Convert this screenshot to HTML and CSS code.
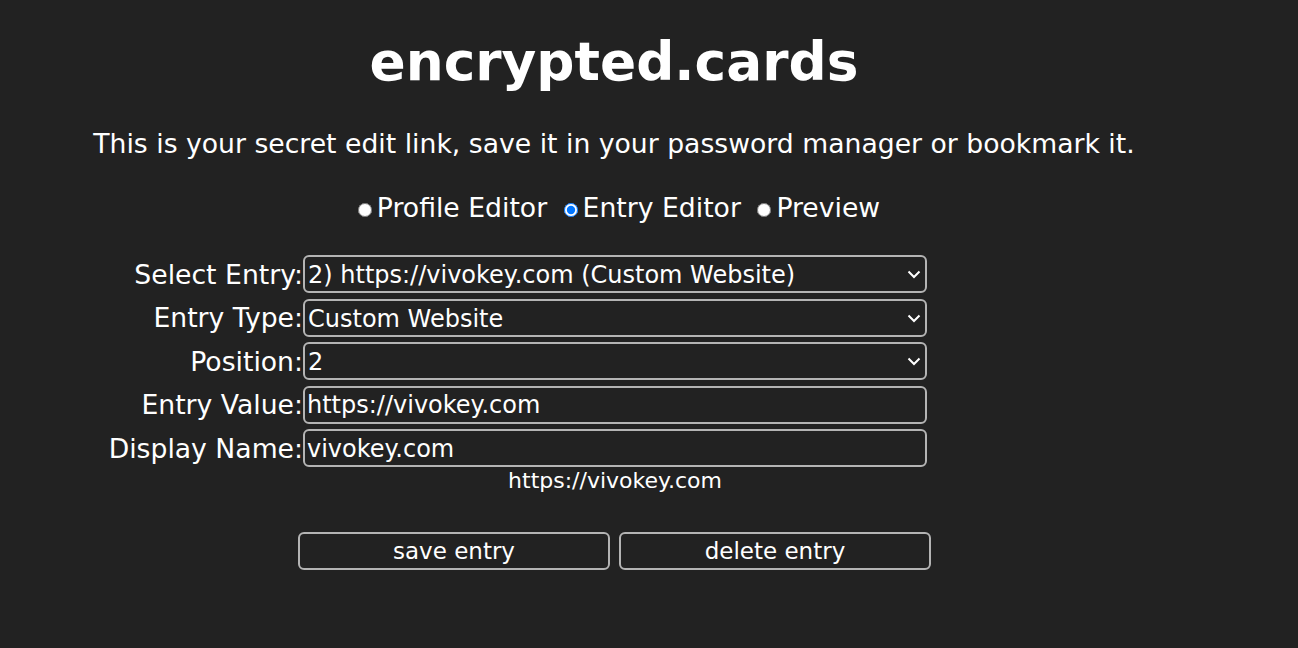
FILE: index.html
```html
<!DOCTYPE html>
<html lang="en">
<head>
    <meta charset="UTF-8">
    <meta name="viewport" content="width=device-width, initial-scale=1.0">
    <title>encrypted.cards</title>
    <link rel="stylesheet" href="styles.css">
</head>
<body>
    <div class="page">
        <h1>encrypted.cards</h1>

        <p class="notice">This is your secret edit link, save it in your password manager or bookmark it.</p>

        <div class="modes">
            <label class="mode"><input type="radio" name="mode" value="profile">Profile Editor</label>
            <label class="mode"><input type="radio" name="mode" value="entry" checked>Entry Editor</label>
            <label class="mode"><input type="radio" name="mode" value="preview">Preview</label>
        </div>

        <form id="entry-form" class="entry-form">
            <label for="select-entry">Select Entry:</label>
            <div class="select-wrap">
                <select id="select-entry">
                    <option>1) vivokey.com</option>
                    <option selected>2) https://vivokey.com (Custom Website)</option>
                </select>
                <svg class="chevron" width="14" height="9" viewBox="0 0 14 9"><path d="M1.5 1.5 L7 7 L12.5 1.5" fill="none" stroke="#ffffff" stroke-width="2"/></svg>
            </div>

            <label for="entry-type">Entry Type:</label>
            <div class="select-wrap">
                <select id="entry-type">
                    <option selected>Custom Website</option>
                    <option>Email</option>
                    <option>Phone</option>
                </select>
                <svg class="chevron" width="14" height="9" viewBox="0 0 14 9"><path d="M1.5 1.5 L7 7 L12.5 1.5" fill="none" stroke="#ffffff" stroke-width="2"/></svg>
            </div>

            <label for="position">Position:</label>
            <div class="select-wrap">
                <select id="position">
                    <option>1</option>
                    <option selected>2</option>
                </select>
                <svg class="chevron" width="14" height="9" viewBox="0 0 14 9"><path d="M1.5 1.5 L7 7 L12.5 1.5" fill="none" stroke="#ffffff" stroke-width="2"/></svg>
            </div>

            <label for="entry-value">Entry Value:</label>
            <input id="entry-value" type="text" value="https://vivokey.com">

            <label for="display-name">Display Name:</label>
            <input id="display-name" type="text" value="vivokey.com">

            <div class="entry-preview">https://vivokey.com</div>
        </form>

        <div class="actions">
            <button type="button">save entry</button>
            <button type="button">delete entry</button>
        </div>
    </div>
</body>
</html>
```

FILE: styles.css
```css
* {
    box-sizing: border-box;
}

body {
    margin: 0;
    background-color: #222222;
    color: #ffffff;
    font-family: "DejaVu Sans", sans-serif;
    font-size: 26.67px;
}

.page {
    width: 1212px;
    margin-left: 8px;
    text-align: center;
}

h1 {
    font-size: 2em;
    font-weight: bold;
    margin: 30px 0 0;
}

.notice {
    margin: 35px 0 0;
}

.modes {
    margin-top: 33px;
    padding-left: 5px;
}

.mode {
    margin-right: 3px;
}

.mode:last-child {
    margin-right: 0;
}

.mode input {
    width: 14px;
    height: 14px;
    margin: 3px 5px 0 5px;
}

.entry-form {
    display: grid;
    grid-template-columns: 295px 624px 1fr;
    row-gap: 5.5px;
    margin-top: 32px;
}

.entry-form label {
    grid-column: 1;
    text-align: right;
    align-self: center;
}

.select-wrap {
    grid-column: 2;
    position: relative;
    display: flex;
}

.select-wrap select {
    flex: 1;
    appearance: none;
    padding: 2px 28px 0 3px;
}

.chevron {
    position: absolute;
    right: 6px;
    top: 15px;
    pointer-events: none;
}

.entry-form select,
.entry-form input {
    grid-column: 2;
    height: 38px;
    font-family: inherit;
    font-size: 24px;
    color: #ffffff;
    background-color: #222222;
    border: 2px solid #b4b4b4;
    border-radius: 6px;
}

.entry-form input {
    padding: 1px 2px 0;
}

.entry-preview {
    grid-column: 2;
    font-size: 22px;
    margin-top: -4.5px;
}

.actions {
    display: flex;
    justify-content: center;
    gap: 9px;
    margin-top: 38.5px;
    padding-left: 1px;
}

button {
    width: 312px;
    height: 38px;
    font-family: inherit;
    font-size: 23px;
    color: #ffffff;
    background-color: #222222;
    border: 2px solid #b4b4b4;
    border-radius: 6px;
}
```
